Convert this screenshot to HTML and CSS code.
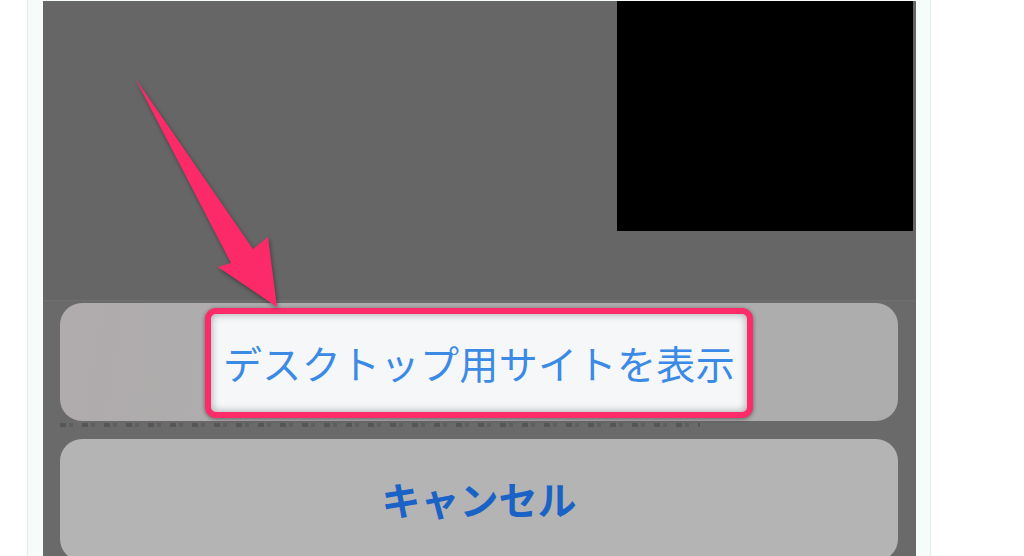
FILE: index.html
```html
<!DOCTYPE html>
<html lang="ja">
<head>
<meta charset="utf-8">
<title>デスクトップ用サイトを表示</title>
<link rel="stylesheet" href="styles.css">
</head>
<body>
<div class="frame">
  <div class="screen">
    <div class="page-top">
      <div class="video"></div>
    </div>
    <div class="sheet">
      <div class="action action-main">
        <span class="highlight">デスクトップ用サイトを表示</span>
      </div>
      <div class="under-text" aria-hidden="true"></div>
      <div class="action action-cancel">キャンセル</div>
    </div>
    <svg class="arrow" viewBox="43 1 873 555" width="873" height="555" aria-hidden="true">
      <polygon points="135,78 253,249 268,237 277,307 218,267 231,263" fill="#fd2a69"/>
    </svg>
  </div>
</div>
</body>
</html>
```

FILE: styles.css
```css
html, body {
  margin: 0;
  padding: 0;
  background: #ffffff;
  width: 1024px;
  height: 556px;
  overflow: hidden;
  font-family: "Noto Sans CJK JP", "Noto Sans", sans-serif;
}

.frame {
  margin-left: 27px;
  width: 904px;
  height: 556px;
  box-sizing: border-box;
  border-left: 1px solid #e2ebe7;
  border-right: 1px solid #e2ebe7;
  background: #f5fcf9;
  padding: 1px 14px 0 15px;
}

.screen {
  position: relative;
  height: 555px;
  background: #666666;
  overflow: hidden;
  display: flex;
  flex-direction: column;
}

.page-top {
  height: 230px;
  display: flex;
  justify-content: flex-end;
  padding-right: 3px;
  flex-shrink: 0;
}

.video {
  width: 296px;
  height: 230px;
  background: #000000;
}

.sheet {
  margin-top: 69px;
  padding: 2px 18px 0 17px;
  background: #6a6a6a;
  flex: 1;
  display: flex;
  flex-direction: column;
  border-top: 1px solid #6f6f6f;
}

.action {
  border-radius: 22px;
  display: flex;
  align-items: center;
  justify-content: center;
  flex-shrink: 0;
}

.action-main {
  height: 118px;
  background: linear-gradient(100deg, #b0abac 0%, #aeadad 25%, #adadad 100%);
}

.highlight {
  box-sizing: border-box;
  width: 548px;
  height: 110px;
  margin-top: 2px;
  border: 6px solid #fc2c6b;
  border-radius: 11px;
  background: #f6f7f9;
  box-shadow: inset 0 0 8px rgba(0, 0, 0, 0.35), 0 1px 4px rgba(0, 0, 0, 0.45);
  display: flex;
  align-items: center;
  justify-content: center;
  color: #3a8ae6;
  font-size: 39px;
  font-weight: 400;
  letter-spacing: 0.4px;
  padding-bottom: 2px;
}

.under-text {
  height: 18px;
  background:
    repeating-linear-gradient(90deg, rgba(50,50,50,0.35) 0 6px, transparent 6px 9px, rgba(50,50,50,0.2) 9px 13px, transparent 13px 22px)
    0 2px / 640px 4px no-repeat;
  filter: blur(0.6px);
  flex-shrink: 0;
}

.action-cancel {
  height: 122px;
  background: #b4b4b4;
  color: #1a62c6;
  font-size: 39px;
  font-weight: 700;
  padding-bottom: 4px;
  box-sizing: border-box;
}

.arrow {
  position: absolute;
  left: 0;
  top: 0;
  filter: drop-shadow(1px 2px 2px rgba(0, 0, 0, 0.4));
  z-index: 2;
}
```
